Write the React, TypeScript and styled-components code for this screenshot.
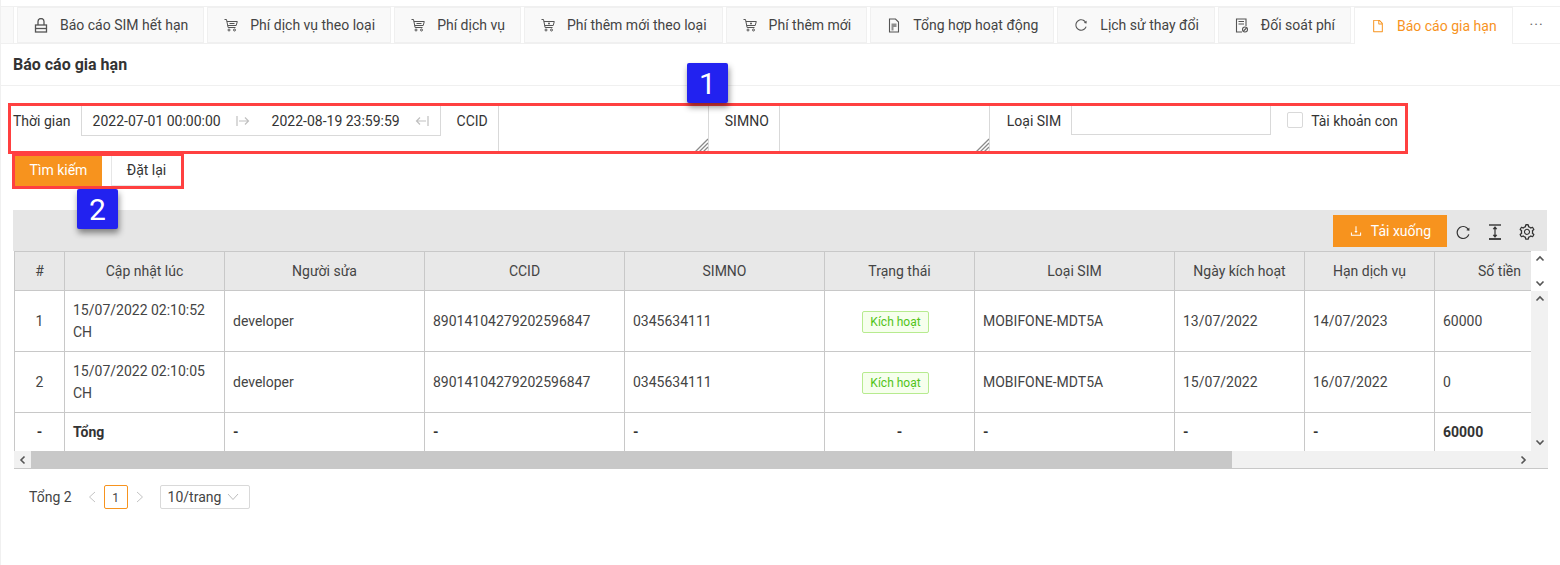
import React from "react";
import styled, { createGlobalStyle } from "styled-components";
import {
  AiOutlineFile,
  AiOutlineReload,
  AiOutlineDownload,
  AiOutlineSetting,
} from "react-icons/ai";

const GlobalStyle = createGlobalStyle`
  html, body {
    margin: 0;
    padding: 0;
    background: #fff;
    color: #333;
    font-family: Roboto, "Liberation Sans", sans-serif;
    font-size: 14px;
    overflow: hidden;
  }
  * { box-sizing: border-box; }
`;

const LockIcon = () => (
  <svg width="14" height="15" viewBox="0 0 14 15" fill="none" stroke="currentColor" strokeWidth="1.300">
    <path d="M4 7V3.500a3 3 0 0 1 6 0V7" />
    <rect x="1.500" y="7" width="11" height="7" />
    <path d="M1.500 10.500h11" />
  </svg>
);

const CartIcon = ({ plus }: { plus?: boolean }) => (
  <svg width="14" height="14" viewBox="0 0 14 14" fill="none" stroke="currentColor" strokeWidth="1">
    <path d="M0.500 1.500h2l1.600 8h7.400" />
    <path d="M2.900 3.500h10.400l-1.100 4h-8.500" />
    {plus ? <circle cx="8" cy="5.500" r="1" fill="currentColor" stroke="none" /> : <path d="M5.500 5.500h5" />}
    <circle cx="5" cy="12" r="1" />
    <circle cx="10.500" cy="12" r="1" />
  </svg>
);

const ReportIcon = () => (
  <svg width="14" height="15" viewBox="0 0 14 15" fill="none" stroke="currentColor" strokeWidth="1.100">
    <path d="M2.500 1h6l3 3v10h-9z" />
    <path d="M4.500 5.500h5V9H6.500v3.500h-2z" fill="currentColor" stroke="none" opacity="0.65" />
  </svg>
);

const ReconcileIcon = () => (
  <svg width="14" height="15" viewBox="0 0 14 15" fill="none" stroke="currentColor" strokeWidth="1.100">
    <path d="M7 14H1.500V1h9.500v7" />
    <path d="M3.500 3.500h5.500M3.500 6h5.500" />
    <circle cx="10" cy="11.500" r="2.500" />
    <path d="M8.500 13l3-3" />
  </svg>
);

const ArrowRightIcon = () => (
  <svg width="14" height="12" viewBox="0 0 14 12" fill="none" stroke="currentColor" strokeWidth="1.200">
    <path d="M1 1v10M3 6h9.500M9 2.500L12.500 6 9 9.500" />
  </svg>
);

const ArrowLeftIcon = () => (
  <svg width="14" height="12" viewBox="0 0 14 12" fill="none" stroke="currentColor" strokeWidth="1.200">
    <path d="M13 1v10M11 6H1.500M5 2.500L1.500 6 5 9.500" />
  </svg>
);

const DensityIcon = () => (
  <svg width="16" height="16" viewBox="0 0 16 16" fill="none" stroke="currentColor">
    <path d="M2 1h12" strokeWidth="1.400" />
    <path d="M8 3v10" strokeWidth="1.200" />
    <path d="M6 5l2-2.500L10 5z" fill="currentColor" strokeWidth="0.500" />
    <path d="M6 11l2 2.500L10 11z" fill="currentColor" strokeWidth="0.500" />
    <path d="M2 15h12" strokeWidth="1.800" />
  </svg>
);

const Hatch = () => (
  <svg width="15" height="15" viewBox="0 0 15 15" fill="none" stroke="#8a8a8a" strokeWidth="1.300">
    <path d="M1 15L15 1M5 15L15 5M9 15l6-6M13 15l2-2" />
  </svg>
);

const Chevron = ({ dir, color = "#555" }: { dir: "up" | "down" | "left" | "right"; color?: string }) => {
  const paths = {
    up: "M1.500 6.500L5 3l3.500 3.500",
    down: "M1.500 3.500L5 7l3.500-3.500",
    left: "M6.500 1.500L3 5l3.500 3.500",
    right: "M3.500 1.500L7 5 3.500 8.500",
  };
  return (
    <svg width="10" height="10" viewBox="0 0 10 10" fill="none" stroke={color} strokeWidth="1.600">
      <path d={paths[dir]} />
    </svg>
  );
};

const PagerArrow = ({ dir }: { dir: "left" | "right" }) => (
  <svg width="8" height="12" viewBox="0 0 8 12" fill="none" stroke="#c4c4c4" strokeWidth="1">
    <path d={dir === "left" ? "M7 1L1.500 6 7 11" : "M1 1l5.500 5L1 11"} />
  </svg>
);

const SelectArrow = () => (
  <svg width="12" height="8" viewBox="0 0 12 8" fill="none" stroke="#bdbdbd" strokeWidth="1">
    <path d="M1 1l5 5.500L11 1" />
  </svg>
);

const tabs = [
  { label: "Báo cáo SIM hết hạn", icon: <LockIcon /> },
  { label: "Phí dịch vụ theo loại", icon: <CartIcon /> },
  { label: "Phí dịch vụ", icon: <CartIcon /> },
  { label: "Phí thêm mới theo loại", icon: <CartIcon plus /> },
  { label: "Phí thêm mới", icon: <CartIcon plus /> },
  { label: "Tổng hợp hoạt động", icon: <ReportIcon /> },
  { label: "Lịch sử thay đổi", icon: <AiOutlineReload size={14} /> },
  { label: "Đối soát phí", icon: <ReconcileIcon /> },
  { label: "Báo cáo gia hạn", icon: <AiOutlineFile size={14} />, active: true },
];

const columns = [
  { title: "#", width: 50 },
  { title: "Cập nhật lúc", width: 160 },
  { title: "Người sửa", width: 200 },
  { title: "CCID", width: 200 },
  { title: "SIMNO", width: 200 },
  { title: "Trạng thái", width: 150 },
  { title: "Loại SIM", width: 200 },
  { title: "Ngày kích hoạt", width: 130 },
  { title: "Hạn dịch vụ", width: 130 },
  { title: "Số tiền", width: 130 },
];

const rows = [
  ["1", "15/07/2022 02:10:52 CH", "developer", "89014104279202596847", "0345634111", "MOBIFONE-MDT5A", "13/07/2022", "14/07/2023", "60000"],
  ["2", "15/07/2022 02:10:05 CH", "developer", "89014104279202596847", "0345634111", "MOBIFONE-MDT5A", "15/07/2022", "16/07/2022", "0"],
];

const Page = styled.div`
  height: 565px;
  border-left: 1px solid #f0f0f0;
  overflow: hidden;
`;

const TabBar = styled.div`
  display: flex;
  align-items: flex-end;
  gap: 3px;
  height: 44px;
  padding-top: 7px;
  background: #fff;
  border-bottom: 1px solid #f0f0f0;
  box-shadow: inset 0 6px 0 #fff, inset 0 7px 0 #f0f0f0;
`;

const TabStub = styled.div`
  flex: none;
  width: 13px;
  height: 36px;
  background: #f9f9f9;
  border-right: 1px solid #f0f0f0;
`;

const Tab = styled.div<{ $active?: boolean }>`
  flex: none;
  display: flex;
  align-items: center;
  height: ${(p) => (p.$active ? "37px" : "36px")};
  margin-bottom: ${(p) => (p.$active ? "-1px" : "0")};
  padding: 0 15px 0 16px;
  gap: 12px;
  white-space: nowrap;
  color: ${(p) => (p.$active ? "#f7931e" : "#444")};
  background: ${(p) => (p.$active ? "#fff" : "#f9f9f9")};
  border: 1px solid #f0f0f0;
  border-bottom: ${(p) => (p.$active ? "none" : "1px solid #f0f0f0")};

  svg {
    flex: none;
    color: ${(p) => (p.$active ? "#f7931e" : "#555")};
  }
`;

const MoreTab = styled.div`
  flex: none;
  width: 40px;
  height: 36px;
  margin-left: -3px;
  padding-left: 8px;
  line-height: 37px;
  text-align: center;
  color: #666;
  letter-spacing: 1px;
`;

const TitleBar = styled.div`
  display: flex;
  align-items: center;
  height: 42px;
  padding-left: 12px;
  font-size: 16px;
  font-weight: 700;
  color: #333;
  border-bottom: 1px solid #f0f0f0;
`;

const Filters = styled.div`
  position: relative;
  padding: 19px 0 0 12px;
`;

const FilterRow = styled.div`
  display: flex;
  align-items: flex-start;
  height: 49px;
`;

const FilterLabel = styled.label<{ $first?: boolean; $pad?: number }>`
  line-height: 33px;
  padding-left: ${(p) => (p.$first ? 0 : p.$pad ?? 16)}px;
  margin-right: 10px;
  color: #333;
  white-space: nowrap;
`;

const DatePicker = styled.div`
  display: flex;
  align-items: center;
  width: 360px;
  height: 31px;
  border: 1px solid #d9d9d9;
  border-top-color: #f0f0f0;
  padding: 1px 0 0 11px;
  color: #333;
`;

const DateValue = styled.span`
  flex: none;
  width: 143px;
  white-space: nowrap;
`;

const DateArrow = styled.span`
  flex: none;
  display: flex;
  width: 36px;
  color: #c0c0c0;
`;

const NoteField = styled.div`
  position: relative;
  flex: none;
  width: 211px;
  height: 49px;
`;

const NoteInput = styled.textarea`
  display: block;
  width: 100%;
  height: 100%;
  padding: 4px 8px;
  border: 1px solid #d9d9d9;
  border-radius: 0;
  outline: none;
  resize: none;
  background: #fff;
`;

const Resizer = styled.span`
  position: absolute;
  right: 1px;
  bottom: 1px;
  display: flex;
`;

const SimInput = styled.input`
  flex: none;
  width: 200px;
  height: 30px;
  border: 1px solid #d9d9d9;
  outline: none;
`;

const CheckBox = styled.span`
  flex: none;
  width: 16px;
  height: 16px;
  margin: 7px 8px 0 16px;
  border: 1px solid #d9d9d9;
  border-radius: 2px;
  background: #fff;
`;

const CheckLabel = styled.span`
  line-height: 33px;
  white-space: nowrap;
`;

const RedBox = styled.div<{ $left: number; $top: number; $w: number; $h: number }>`
  position: absolute;
  left: ${(p) => p.$left}px;
  top: ${(p) => p.$top}px;
  width: ${(p) => p.$w}px;
  height: ${(p) => p.$h}px;
  border: 3px solid #ff4040;
  pointer-events: none;
`;

const Badge = styled.div<{ $left: number; $top: number }>`
  position: absolute;
  left: ${(p) => p.$left}px;
  top: ${(p) => p.$top}px;
  width: 41px;
  height: 40px;
  display: flex;
  align-items: center;
  justify-content: center;
  background: #2222f0;
  color: #fff;
  font-size: 30px;
  border-radius: 2px;
  box-shadow: 1px 4px 6px rgba(0, 0, 0, 0.45);
  z-index: 2;
`;

const Actions = styled.div`
  display: flex;
  gap: 9px;
  padding-left: 2px;
  height: 56px;
`;

const Button = styled.button<{ $primary?: boolean }>`
  height: 32px;
  padding: 0;
  width: ${(p) => (p.$primary ? "87px" : "71px")};
  font: inherit;
  color: ${(p) => (p.$primary ? "#fff" : "#333")};
  background: ${(p) => (p.$primary ? "#f7931e" : "#fff")};
  border: 1px solid ${(p) => (p.$primary ? "#f7931e" : "#e6e6e6")};
`;

const TableWrap = styled.div`
  margin-left: 12px;
  width: 1535px;
`;

const Toolbar = styled.div`
  display: flex;
  align-items: center;
  justify-content: flex-end;
  gap: 16px;
  height: 41px;
  width: 1534px;
  padding-right: 12px;
  background: #e6e6e6;
`;

const DownloadButton = styled.div`
  display: flex;
  align-items: center;
  justify-content: center;
  gap: 8px;
  width: 114px;
  height: 32px;
  margin-right: -8px;
  background: #f7931e;
  color: #fff;
`;

const ToolIcon = styled.span`
  display: flex;
  justify-content: center;
  width: 16px;
  margin-top: 3px;
  color: #333;
`;

const TableFrame = styled.div`
  display: grid;
  grid-template-columns: 1fr 17px;
  margin-left: 1px;
  width: 1534px;
  height: 218px;
  border-bottom: 1px solid #c8c8c8;
`;

const TableClip = styled.div`
  overflow: hidden;
  height: 200px;
`;

const Table = styled.table`
  border-collapse: collapse;
  table-layout: fixed;
  width: 1550px;
  border-left: 1px solid #c8c8c8;
`;

const Th = styled.th`
  height: 39px;
  padding: 0 8px;
  background: #e8e8e8;
  border: 1px solid #c8c8c8;
  border-left: none;
  font-weight: 400;
  color: #444;
  text-align: center;
  white-space: nowrap;
`;

const Td = styled.td<{ $center?: boolean; $bold?: boolean }>`
  height: 61px;
  padding: 0 8px;
  border: 1px solid #c8c8c8;
  border-left: none;
  line-height: 22px;
  color: #444;
  text-align: ${(p) => (p.$center ? "center" : "left")};
  font-weight: ${(p) => (p.$bold ? 700 : 400)};

  tr.total & {
    height: 39px;
    border-bottom: none;
    color: #333;
  }
`;

const StatusTag = styled.span`
  display: inline-block;
  height: 22px;
  margin-right: 8px;
  padding: 0 7px;
  font-size: 12px;
  line-height: 20px;
  color: #52c41a;
  background: #f6ffed;
  border: 1px solid #b7eb8f;
  border-radius: 2px;
`;

const VScroll = styled.div`
  display: flex;
  flex-direction: column;
  height: 200px;
`;

const VHead = styled.div`
  height: 40px;
  display: flex;
  flex-direction: column;
  align-items: center;
  justify-content: space-between;
  padding: 3px 0;
  background: #fff;
`;

const VTrack = styled.div`
  flex: 1;
  display: flex;
  flex-direction: column;
  align-items: center;
  justify-content: space-between;
  padding: 3px 0 4px;
  background: #f1f1f1;
`;

const HScroll = styled.div`
  grid-column: 1 / 3;
  display: flex;
  align-items: center;
  height: 17px;
  background: #f1f1f1;
`;

const HEnd = styled.div`
  display: flex;
  align-items: center;
  justify-content: center;
  flex: none;
  width: 17px;
  height: 17px;
`;

const HThumb = styled.div`
  width: 1201px;
  height: 17px;
  background: #c8c8c8;
  margin-right: auto;
`;

const HRight = styled(HEnd)`
  margin-right: 17px;
`;

const Pagination = styled.div`
  display: flex;
  align-items: center;
  height: 24px;
  margin-top: 16px;
  padding-left: 16px;
  color: #444;
`;

const Total = styled.span`
  margin-right: 14px;
`;

const PageArrow = styled.span`
  display: flex;
  width: 12px;
  justify-content: center;
`;

const PageNum = styled.span`
  width: 24px;
  height: 24px;
  margin: 0 6px;
  line-height: 24px;
  text-align: center;
  font-size: 12px;
  border: 1px solid #f7931e;
  border-radius: 2px;
`;

const PageSize = styled.div`
  display: flex;
  align-items: center;
  justify-content: space-between;
  width: 90px;
  height: 24px;
  margin-left: 14px;
  padding: 0 10px 0 7px;
  border: 1px solid #d9d9d9;
  border-radius: 2px;
`;

const Note = () => (
  <NoteField>
    <NoteInput />
    <Resizer><Hatch /></Resizer>
  </NoteField>
);

export default function App() {
  return (
    <>
      <GlobalStyle />
      <Page>
        <TabBar>
          <TabStub />
          {tabs.map((t) => (
            <Tab key={t.label} $active={t.active}>
              {t.icon}
              {t.label}
            </Tab>
          ))}
          <MoreTab>···</MoreTab>
        </TabBar>
        <TitleBar>Báo cáo gia hạn</TitleBar>
        <Filters>
          <FilterRow>
            <FilterLabel $first>Thời gian</FilterLabel>
            <DatePicker>
              <DateValue>2022-07-01 00:00:00</DateValue>
              <DateArrow><ArrowRightIcon /></DateArrow>
              <DateValue>2022-08-19 23:59:59</DateValue>
              <DateArrow><ArrowLeftIcon /></DateArrow>
            </DatePicker>
            <FilterLabel>CCID</FilterLabel>
            <Note />
            <FilterLabel>SIMNO</FilterLabel>
            <Note />
            <FilterLabel $pad={17}>Loại SIM</FilterLabel>
            <SimInput />
            <CheckBox />
            <CheckLabel>Tài khoản con</CheckLabel>
          </FilterRow>
          <Actions>
            <Button $primary>Tìm kiếm</Button>
            <Button>Đặt lại</Button>
          </Actions>
          <RedBox $left={7} $top={17} $w={1400} $h={51} />
          <RedBox $left={11} $top={67} $w={172} $h={36} />
          <Badge $left={686} $top={-23}>1</Badge>
          <Badge $left={76} $top={103}>2</Badge>
        </Filters>
        <TableWrap>
          <Toolbar>
            <DownloadButton>
              <AiOutlineDownload size={14} />
              Tải xuống
            </DownloadButton>
            <ToolIcon><AiOutlineReload size={17} /></ToolIcon>
            <ToolIcon><DensityIcon /></ToolIcon>
            <ToolIcon><AiOutlineSetting size={18} style={{ flex: "none" }} /></ToolIcon>
          </Toolbar>
          <TableFrame>
            <TableClip>
              <Table>
                <colgroup>
                  {columns.map((c) => (
                    <col key={c.title} style={{ width: c.width }} />
                  ))}
                </colgroup>
                <thead>
                  <tr>
                    {columns.map((c) => (
                      <Th key={c.title}>{c.title}</Th>
                    ))}
                  </tr>
                </thead>
                <tbody>
                  {rows.map((r) => (
                    <tr key={r[0]}>
                      <Td $center>{r[0]}</Td>
                      <Td>{r[1]}</Td>
                      <Td>{r[2]}</Td>
                      <Td>{r[3]}</Td>
                      <Td>{r[4]}</Td>
                      <Td $center><StatusTag>Kích hoạt</StatusTag></Td>
                      <Td>{r[5]}</Td>
                      <Td>{r[6]}</Td>
                      <Td>{r[7]}</Td>
                      <Td>{r[8]}</Td>
                    </tr>
                  ))}
                  <tr className="total">
                    <Td $center $bold>-</Td>
                    <Td $bold>Tổng</Td>
                    <Td $bold>-</Td>
                    <Td $bold>-</Td>
                    <Td $bold>-</Td>
                    <Td $center $bold>-</Td>
                    <Td $bold>-</Td>
                    <Td $bold>-</Td>
                    <Td $bold>-</Td>
                    <Td $bold>60000</Td>
                  </tr>
                </tbody>
              </Table>
            </TableClip>
            <VScroll>
              <VHead>
                <Chevron dir="up" />
                <Chevron dir="down" />
              </VHead>
              <VTrack>
                <Chevron dir="up" />
                <Chevron dir="down" />
              </VTrack>
            </VScroll>
            <HScroll>
              <HEnd><Chevron dir="left" /></HEnd>
              <HThumb />
              <HRight><Chevron dir="right" /></HRight>
            </HScroll>
          </TableFrame>
          <Pagination>
            <Total>Tổng 2</Total>
            <PageArrow><PagerArrow dir="left" /></PageArrow>
            <PageNum>1</PageNum>
            <PageArrow><PagerArrow dir="right" /></PageArrow>
            <PageSize>
              10/trang
              <SelectArrow />
            </PageSize>
          </Pagination>
        </TableWrap>
      </Page>
    </>
  );
}
